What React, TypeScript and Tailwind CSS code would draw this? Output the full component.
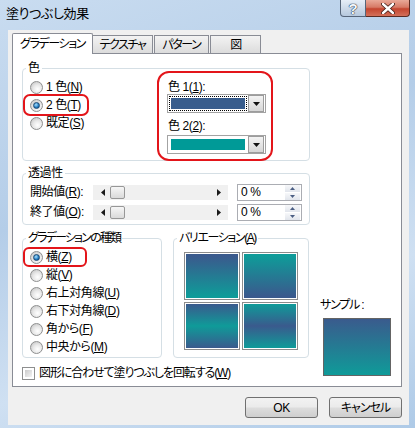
import React from 'react';

function U({ children }: { children: React.ReactNode }) {
  return <span className="underline underline-offset-[1px]">{children}</span>;
}

function Radio({ checked }: { checked?: boolean }) {
  return (
    <span className="flex items-center justify-center w-[13px] h-[13px] shrink-0 rounded-full border border-[#8e8f8f] bg-[radial-gradient(circle_at_60%_65%,#ffffff_0%,#e8e8e8_45%,#bcbcbc_100%)]">
      {checked && (
        <span className="w-[7px] h-[7px] rounded-full border border-[#1d4a73] bg-[radial-gradient(circle_at_40%_35%,#a6e0ff,#1f78be_60%,#0b3c6c)]" />
      )}
    </span>
  );
}

function Option({ checked, ring, children }: { checked?: boolean; ring?: 'big' | 'small'; children: React.ReactNode }) {
  const inner = (
    <>
      <Radio checked={checked} />
      <span className="whitespace-nowrap">{children}</span>
    </>
  );
  if (ring === 'big') {
    return (
      <div className="-my-[2px] h-[22px] w-[66px] border-2 border-[#e3151a] rounded-[7px] pl-[5px] flex items-center gap-[3px]">
        {inner}
      </div>
    );
  }
  if (ring === 'small') {
    return (
      <div className="-my-[1px] h-[20px] w-[64px] border-2 border-[#e3151a] rounded-[6px] pl-[5px] flex items-center gap-[3px]">
        {inner}
      </div>
    );
  }
  return <div className="h-[18px] pl-[7px] flex items-center gap-[3px]">{inner}</div>;
}

function Legend({ children, tight }: { children: React.ReactNode; tight?: string }) {
  return (
    <div className={`-mt-[8px] ml-[3px] px-[2px] w-fit h-[14px] leading-[14px] bg-white whitespace-nowrap ${tight ?? ''}`}>
      {children}
    </div>
  );
}

function Arrow({ dir }: { dir: 'left' | 'right' }) {
  return (
    <svg width="4" height="7" viewBox="0 0 4 7">
      {dir === 'left' ? <path d="M4 0 L0 3.5 L4 7 Z" fill="#1a1a1a" /> : <path d="M0 0 L4 3.5 L0 7 Z" fill="#1a1a1a" />}
    </svg>
  );
}

function Track() {
  return (
    <div className="w-[135px] h-[15px] bg-[#f0f0f0] flex items-center pl-[8px] pr-[7px]">
      <Arrow dir="left" />
      <div className="ml-[5px] w-[15px] h-[13px] rounded-[2px] border border-[#979797] bg-gradient-to-b from-[#f6f6f6] to-[#dadada]" />
      <div className="flex-1" />
      <Arrow dir="right" />
    </div>
  );
}

function Spin() {
  return (
    <div className="ml-[9px] w-[65px] h-[17px] border border-[#abadb3] bg-white flex items-center">
      <span className="pl-[3px] flex-1 leading-[14px]">0 %</span>
      <div className="w-[15px] h-[15px] mr-[1px] flex flex-col gap-px">
        <div className="flex-1 flex items-center justify-center bg-gradient-to-b from-[#f7f8fa] to-[#e1e5ec]">
          <svg width="5" height="3" viewBox="0 0 5 3"><path d="M0 3 L2.5 0 L5 3 Z" fill="#4c5f84" /></svg>
        </div>
        <div className="flex-1 flex items-center justify-center bg-gradient-to-b from-[#f7f8fa] to-[#e1e5ec]">
          <svg width="5" height="3" viewBox="0 0 5 3"><path d="M0 0 L2.5 3 L5 0 Z" fill="#4c5f84" /></svg>
        </div>
      </div>
    </div>
  );
}

function ColorCombo({ color, focus }: { color: string; focus?: boolean }) {
  return (
    <div className="ml-[8px] w-[99px] h-[19px] border border-[#a3a3a3] bg-white flex items-center pl-px pr-px">
      <div className={`w-[80px] h-[15px] p-px ${focus ? 'border border-dotted border-black' : 'border border-white'}`}>
        <div className={`w-full h-full ${color}`} />
      </div>
      <div className="ml-[1px] w-[16px] h-[17px] border border-[#9c9c9c] bg-gradient-to-b from-[#f3f3f3] to-[#d6d6d6] flex items-center justify-center">
        <svg width="7" height="4" viewBox="0 0 7 4"><path d="M0 0 L7 0 L3.5 4 Z" fill="#111" /></svg>
      </div>
    </div>
  );
}

function Swatch({ grad }: { grad: string }) {
  return (
    <div className="w-[56px] h-[48px] border border-[#8c8c8c] p-px bg-white">
      <div className={`w-full h-full ${grad}`} />
    </div>
  );
}

function Button({ children }: { children: React.ReactNode }) {
  return (
    <div className="w-[73px] h-[21px] rounded-[3px] border border-[#707070] bg-[linear-gradient(to_bottom,#f2f2f2_0%,#ebebeb_48%,#dddddd_52%,#cfcfcf_100%)] flex items-center justify-center">
      {children}
    </div>
  );
}

export default function App() {
  return (
    <div className="w-[415px] h-[428px] overflow-hidden flex flex-col bg-[linear-gradient(160deg,#c9dcf0_0%,#b4cde8_40%,#cfe0f2_70%,#aecae7_100%)] text-[12px] leading-[14px] tracking-[-0.4px] text-black font-['Liberation_Sans','Noto_Sans_CJK_JP',sans-serif] [font-feature-settings:'palt']">
      {/* Title bar */}
      <div className="h-[30px] flex items-start justify-between shrink-0">
        <div className="pl-[6px] pt-[5px] text-[13px] leading-[17px]">塗りつぶし効果</div>
        <div className="flex mr-[5px]">
          <div className="w-[26px] h-[17px] rounded-bl-[4px] border border-t-0 border-[#566579] bg-gradient-to-b from-[#e6eef7] to-[#b6c8dd] flex items-center justify-center">
            <span className="text-[15px] leading-[15px] font-bold text-[#f4f7fb] [text-shadow:0_0_1px_#25354a,0_0_1px_#25354a,0_0_1px_#25354a]">?</span>
          </div>
          <div className="w-[44px] h-[17px] rounded-br-[4px] border border-t-0 border-l-0 border-[#5a2a22] bg-[linear-gradient(to_bottom,#e9a998_0%,#d77a66_45%,#c4452f_55%,#d3705a_100%)] flex items-center justify-center">
            <svg width="14" height="11" viewBox="0 0 14 11">
              <path d="M2 1 L12 10 M12 1 L2 10" stroke="#3d1a14" strokeWidth="4" strokeLinecap="round" />
              <path d="M2 1 L12 10 M12 1 L2 10" stroke="#ffffff" strokeWidth="2.4" strokeLinecap="round" />
            </svg>
          </div>
        </div>
      </div>

      {/* Client area */}
      <div className="ml-[8px] w-[401px] h-[395px] bg-[#f0f0f0] pl-[4px] pt-[3px] flex flex-col">
        {/* Tabs */}
        <div className="flex items-end h-[20px] tracking-[-1.4px]">
          <div className="relative z-10 -mb-px w-[81px] h-[21px] border border-b-0 border-[#898c95] rounded-t-[2px] bg-white flex items-center justify-center pb-px">
            グラデーション
          </div>
          <div className="w-[61px] h-[18px] border border-b-0 border-[#898c95] -ml-px bg-gradient-to-b from-[#f3f3f3] to-[#dcdcdc] flex items-center justify-center">
            テクスチャ
          </div>
          <div className="ml-[1px] w-[55px] h-[18px] border border-b-0 border-[#898c95] bg-gradient-to-b from-[#f3f3f3] to-[#dcdcdc] flex items-center justify-center">
            パターン
          </div>
          <div className="ml-[1px] w-[51px] h-[18px] border border-b-0 border-[#898c95] bg-gradient-to-b from-[#f3f3f3] to-[#dcdcdc] flex items-center justify-center">
            図
          </div>
        </div>

        {/* Panel */}
        <div className="w-[390px] h-[334px] border border-[#898c95] bg-white pt-[14px] pl-[9px] flex flex-col">
          {/* 色 */}
          <div className="w-[288px] h-[93px] border border-[#d5dfe5] rounded-[4px]">
            <Legend>色</Legend>
            <div className="flex -mt-[4px]">
              <div className="w-[134px] pt-[7px] flex flex-col">
                <Option>
                  1 色(<U>N</U>)
                </Option>
                <Option checked ring="big">
                  2 色(<U>T</U>)
                </Option>
                <Option>
                  既定(<U>S</U>)
                </Option>
              </div>
              <div className="w-[116px] h-[90px] border-2 border-[#e3151a] rounded-[12px] flex flex-col">
                <div className="mt-[7px] pl-[9px] h-[14px]">
                  色 1(<U>1</U>):
                </div>
                <ColorCombo color="bg-[#385d8d]" focus />
                <div className="mt-[6px] pl-[9px] h-[14px]">
                  色 2(<U>2</U>):
                </div>
                <div className="mt-[2px]">
                  <ColorCombo color="bg-[#009a97]" />
                </div>
              </div>
            </div>
          </div>

          {/* 透過性 */}
          <div className="mt-[12px] w-[288px] h-[52px] border border-[#d5dfe5] rounded-[4px]">
            <Legend>透過性</Legend>
            <div className="mt-[2px] flex items-center h-[20px] pl-[7px]">
              <span className="w-[63px] whitespace-nowrap">
                開始値(<U>R</U>):
              </span>
              <Track />
              <Spin />
            </div>
            <div className="flex items-center h-[20px] pl-[7px]">
              <span className="w-[63px] whitespace-nowrap">
                終了値(<U>O</U>):
              </span>
              <Track />
              <Spin />
            </div>
          </div>

          {/* Lower part */}
          <div className="mt-[13px] flex">
            <div className="flex flex-col">
              <div className="flex">
                <div className="w-[140px] h-[120px] border border-[#d5dfe5] rounded-[4px]">
                  <Legend tight="tracking-[-1.8px]">グラデーションの種類</Legend>
                  <div className="mt-[3px] flex flex-col">
                    <Option checked ring="small">
                      横(<U>Z</U>)
                    </Option>
                    <Option>
                      縦(<U>V</U>)
                    </Option>
                    <Option>
                      右上対角線(<U>U</U>)
                    </Option>
                    <Option>
                      右下対角線(<U>D</U>)
                    </Option>
                    <Option>
                      角から(<U>F</U>)
                    </Option>
                    <Option>
                      中央から(<U>M</U>)
                    </Option>
                  </div>
                </div>
                <div className="ml-[11px] w-[136px] h-[120px] border border-[#d5dfe5] rounded-[4px]">
                  <Legend tight="tracking-[-1.4px]">
                    バリエーション(<U>A</U>)
                  </Legend>
                  <div className="mt-[7px] pl-[10px] grid grid-cols-[56px_56px] gap-[2px] w-fit">
                    <Swatch grad="bg-[linear-gradient(to_bottom,#3a5a8d_5%,#0f9b99_95%)]" />
                    <Swatch grad="bg-[linear-gradient(to_bottom,#0f9b99_5%,#3a5a8d_95%)]" />
                    <Swatch grad="bg-[linear-gradient(to_bottom,#3a5a8d_0%,#0f9b99_50%,#3a5a8d_100%)]" />
                    <Swatch grad="bg-[linear-gradient(to_bottom,#0f9b99_0%,#3a5a8d_50%,#0f9b99_100%)]" />
                  </div>
                </div>
              </div>
              <div className="mt-[8px] h-[14px] flex items-center gap-[3px]">
                <span className="w-[13px] h-[13px] border border-[#8e8f8f] bg-white p-[2px]">
                  <span className="block w-full h-full bg-gradient-to-br from-[#cbcbcb] to-[#f4f4f4]" />
                </span>
                <span className="ml-[1px] whitespace-nowrap tracking-[-1.1px]">
                  図形に合わせて塗りつぶしを回転する(<U>W</U>)
                </span>
              </div>
            </div>
            <div className="ml-[11px] pt-[60px] flex flex-col">
              <div className="h-[14px] whitespace-nowrap tracking-[-1.2px]">サンプル :</div>
              <div className="mt-[6px] ml-[3px] w-[68px] h-[58px] border border-[#646464] bg-[linear-gradient(to_bottom,#3a5b8d,#0f9b99)]" />
            </div>
          </div>
        </div>

        {/* Buttons */}
        <div className="mt-[10px] w-[390px] flex justify-end gap-[11px]">
          <Button>OK</Button>
          <Button>
            <span className="tracking-[-1px]">キャンセル</span>
          </Button>
        </div>
      </div>
    </div>
  );
}
